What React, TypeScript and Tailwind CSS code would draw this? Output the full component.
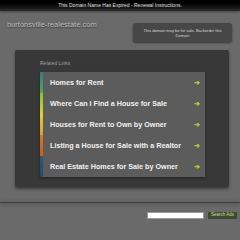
import React from "react";

const rows = [
  { t: "Homes for Rent", c: "bg-gradient-to-b from-[#2f7f7a] to-[#5aa55a]" },
  { t: "Where Can I Find a House for Sale", c: "bg-gradient-to-b from-[#8abb3a] to-[#d8d030]" },
  { t: "Houses for Rent to Own by Owner", c: "bg-gradient-to-b from-[#e0d030] to-[#d8a030]" },
  { t: "Listing a House for Sale with a Realtor", c: "bg-gradient-to-b from-[#d07828] to-[#c85c20]" },
  { t: "Real Estate Homes for Sale by Owner", c: "bg-gradient-to-b from-[#2a5a78] to-[#2a4a60]" },
];

export default function App() {
  return (
    <div className="w-[240px] h-[240px] overflow-hidden bg-[#6a6a6a] flex flex-col" style={{ fontFamily: '"Liberation Sans", Arial, sans-serif' }}>
      <div className="h-[11px] bg-gradient-to-b from-[#000] to-[#2c2c2c] flex items-center justify-center text-[5px] leading-none text-[#e0e0e0] shadow-[0_1px_2px_rgba(0,0,0,0.4)]">
        This Domain Name Has Expired - Renewal Instructions.
      </div>
      <div className="flex items-start justify-between pl-[7px] pr-[8px] pt-[10px]">
        <div className="text-[7.5px] leading-[8px] text-[#bdbdbd] [text-shadow:0_1px_1px_rgba(0,0,0,0.5)]">burtonsville-realestate.com</div>
        <div className="mt-[2px] w-[99px] h-[19px] rounded-[3px] bg-[#474747] shadow-[0_1px_2px_rgba(0,0,0,0.5)] flex items-center justify-center text-center text-[4px] leading-[5px] text-[#d8d8d8] px-[9px]">
          This domain may be for sale. Backorder this Domain
        </div>
      </div>
      <div className="mt-[8px] ml-[15px] w-[214px] h-[137px] rounded-[2px] bg-[#383838] shadow-[0_2px_3px_rgba(0,0,0,0.45)] flex flex-col pl-[25px] pt-[10px]">
        <div className="text-[5px] leading-[6px] text-[#a0a0a0] h-[12px]">Related Links</div>
        <div className="w-[165px] bg-[#5c5c5c] flex flex-col shadow-[0_1px_2px_rgba(0,0,0,0.4)]">
          {rows.map((r) => (
            <div key={r.t} className="h-[21px] flex items-center">
              <div className={`w-[3px] h-full ${r.c}`} />
              <div className="ml-[7px] flex-1 text-[7.2px] font-bold text-[#f2f2f2] leading-none">{r.t}</div>
              <div className="mr-[5px] text-[7px] font-bold text-[#b8d030] leading-none">➔</div>
            </div>
          ))}
        </div>
      </div>
      <div className="mt-[15px] h-[1px] bg-[#3c3c3c] shadow-[0_1px_4px_rgba(0,0,0,0.5)]" />
      <div className="mt-[9px] flex items-center justify-end pr-[3px] gap-[4px]">
        <div className="w-[57px] h-[7px] bg-white border border-[#999]" />
        <div className="w-[29px] h-[7px] bg-[#3d4a2c] flex items-center justify-center text-[4.5px] leading-none text-[#cfd8b0]">Search Ads</div>
      </div>
    </div>
  );
}
